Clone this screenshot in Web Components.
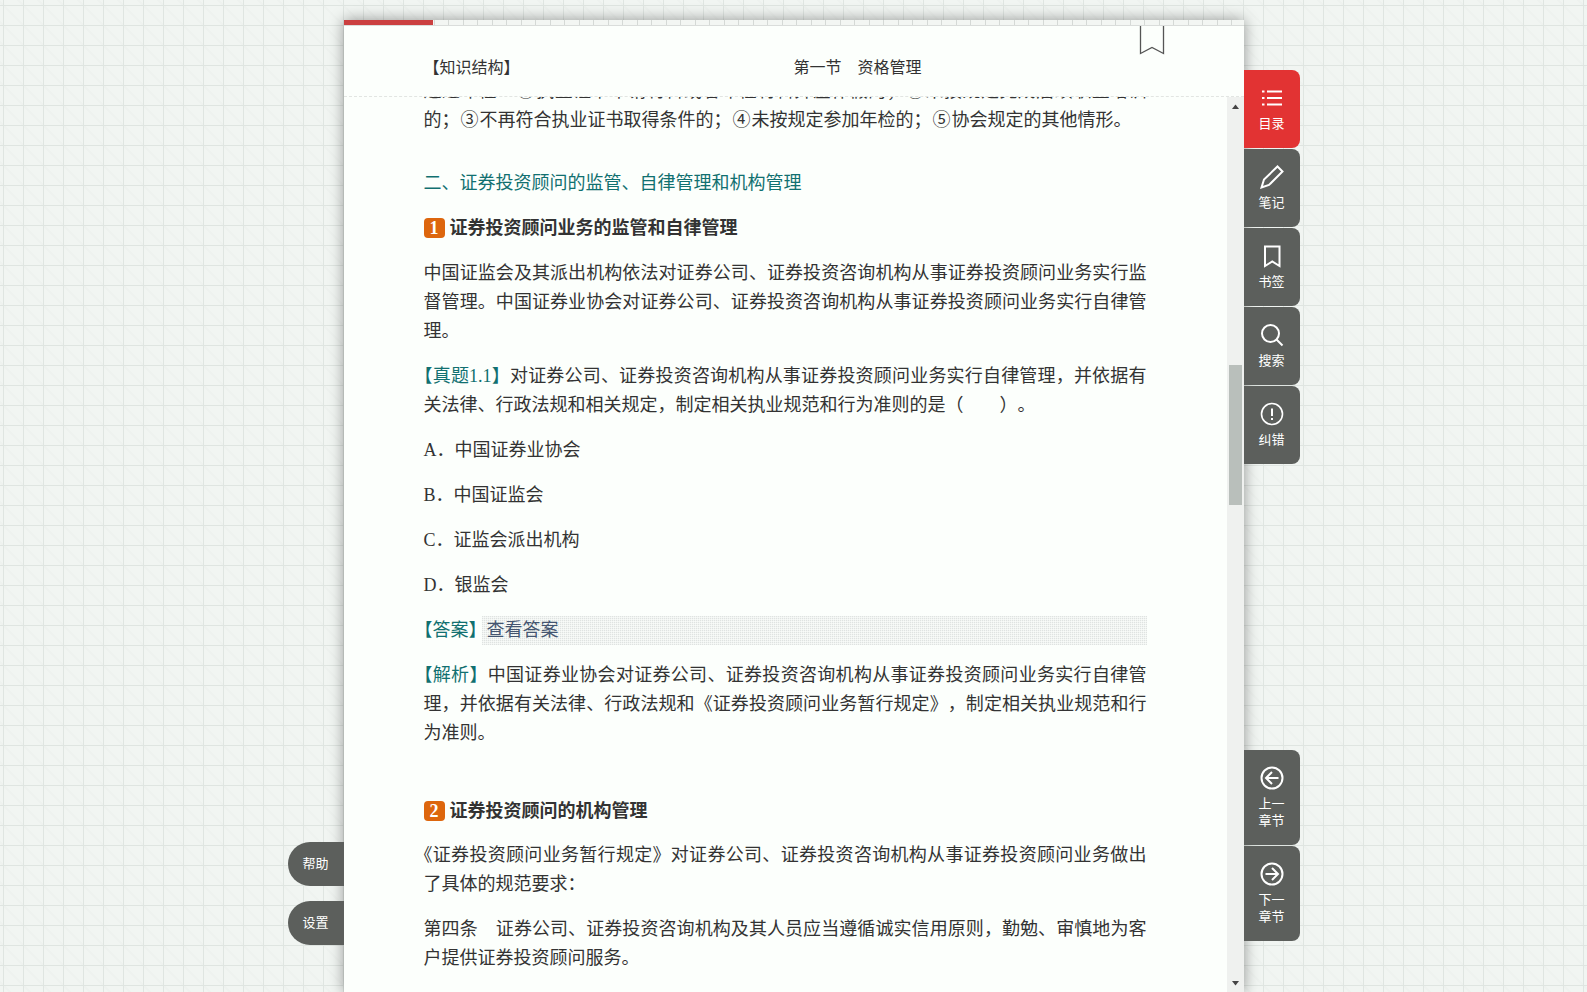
<!DOCTYPE html>
<html lang="zh-CN">
<head>
<meta charset="utf-8">
<title>第一节 资格管理</title>
<style>
html, body { margin: 0; height: 100%; }
body { overflow: hidden; font-family: "Liberation Serif", "Noto Sans CJK SC", sans-serif; color: #333; }
</style>
</head>
<body>
<reader-app></reader-app>

<template id="t-app">
<style>
:host {
  display: grid; grid-template-columns: minmax(0, 1fr) minmax(0, 900px) minmax(0, 1fr); height: 100vh; overflow: hidden;
  background-color: #f1f5f2;
  background-image:
    linear-gradient(90deg, #dfe5e1 1px, transparent 1px),
    linear-gradient(#dfe5e1 1px, transparent 1px),
    linear-gradient(45deg, transparent 47%, #eef2ef 47%, #eef2ef 53%, transparent 53%);
  background-size: 20px 20px;
  background-position: 3px 5px;
}
.left { display: flex; flex-direction: column; align-items: flex-end; justify-content: flex-end; gap: 15px; padding-bottom: 47px; z-index: 1; }
.right { display: flex; flex-direction: column; justify-content: space-between; align-items: flex-start; padding: 70px 0 51px; z-index: 1; }
nav { display: flex; flex-direction: column; gap: 1px; }
</style>
<div class="left">
  <pill-button>帮助</pill-button>
  <pill-button>设置</pill-button>
</div>
<book-page>
  <span slot="chapter">【知识结构】</span>
  <span slot="title">第一节　资格管理</span>
  <book-text></book-text>
</book-page>
<div class="right">
  <nav aria-label="工具">
    <side-button active icon="list">目录</side-button>
    <side-button icon="pen">笔记</side-button>
    <side-button icon="mark">书签</side-button>
    <side-button icon="find">搜索</side-button>
    <side-button icon="warn">纠错</side-button>
  </nav>
  <nav aria-label="翻页">
    <side-button icon="prev" tall>上一<br>章节</side-button>
    <side-button icon="next" tall>下一<br>章节</side-button>
  </nav>
</div>
</template>

<template id="t-pill">
<style>
:host { display: block; }
button { display: flex; align-items: center; width: 56px; height: 44px; padding: 0 0 3px 15px; border: 0; border-radius: 22px 0 0 22px; background: #5c5f5c; color: #fff; font: 13px/17px "Noto Sans CJK SC", sans-serif; white-space: nowrap; }
</style>
<button type="button"><slot></slot></button>
</template>

<template id="t-side">
<style>
:host { display: block; }
button { display: flex; flex-direction: column; align-items: center; justify-content: center; gap: 4px; width: 56px; height: 78px; padding: 0 0 2px; border: 0; border-radius: 0 8px 8px 0; background: #5c5f5c; color: #fff; font: 13px/17px "Noto Sans CJK SC", sans-serif; }
:host([active]) button { background: #e23333; }
:host([tall]) button { height: 95px; }
svg { display: block; width: 24px; height: 24px; fill: none; stroke: #fff; stroke-width: 2; }
</style>
<button type="button"><svg viewBox="0 0 24 24" aria-hidden="true"></svg><span><slot></slot></span></button>
</template>

<template id="t-page">
<style>
:host { display: flex; flex-direction: column; margin-top: 20px; min-height: 0; background: #fcfffc; box-shadow: 0 0 14px rgba(0,0,0,.4); }
.progress { flex: none; height: 5px; border-bottom: 1px solid #dadddb;
  background: linear-gradient(90deg, transparent 13px, #d5d9d6 13px, #d5d9d6 14px, transparent 14px, transparent 28px, #d5d9d6 28px) 4px 0 / 29px 5px #f3f6f3; }
.progress i { display: block; width: 89px; height: 5px; background: #cb4040; }
header { flex: none; position: relative; display: grid; grid-template-columns: 1fr 1fr; height: 70px; border-bottom: 1px dashed #e2e5e2; font-size: 16px; line-height: 24px; }
header div { padding-top: 30px; }
header div:first-child { padding-left: 80px; }
.ribbon { position: absolute; right: 79px; top: 0; width: 26px; height: 29px; padding: 0; border: 0; background: none; }
.ribbon svg { display: block; }
.body { flex: 1; min-height: 0; display: flex; }
.view { flex: 1; min-width: 0; overflow: hidden; padding: 0 80px; }
.bar { flex: none; width: 17px; display: flex; flex-direction: column; align-items: center; background: #eff1ef; }
.bar svg { flex: none; width: 17px; height: 18px; fill: #444; }
.track { flex: 1; width: 13px; display: flex; flex-direction: column; }
.track::before { content: ""; flex: 250; }
.thumb { flex: 140; background: #b9bfbb; }
.track::after { content: ""; flex: 469; }
</style>
<div class="progress"><i></i></div>
<header>
  <div><slot name="chapter"></slot></div>
  <div><slot name="title"></slot></div>
  <button class="ribbon" type="button" aria-label="添加书签"><svg width="26" height="29" viewBox="0 0 26 29" fill="none" stroke="#555" stroke-width="1.3"><path d="M1.5 0V27.500L13 21.500L24.500 27.500V0"/></svg></button>
</header>
<div class="body">
  <div class="view"><slot></slot></div>
  <div class="bar">
    <svg viewBox="0 0 17 18"><path d="M5 12L8.500 7.500L12 12Z"/></svg>
    <div class="track"><div class="thumb"></div></div>
    <svg viewBox="0 0 17 18"><path d="M5 7L8.500 11.500L12 7Z"/></svg>
  </div>
</div>
</template>

<template id="t-text">
<style>
:host { display: block; margin-top: -20px; font-size: 18px; line-height: 29px; color: #333; text-spacing-trim: space-all; }
p, h2, h3 { margin: 0 0 16px; font-size: 18px; text-align: justify; }
h2 { margin-top: 34px; font-weight: 400; color: #117070; }
h3 { display: flex; align-items: center; gap: 5px; font-weight: 700; }
h3 b { width: 21px; height: 20px; margin-bottom: 2px; border-radius: 4px; background: #dd660d; color: #fff; line-height: 20px; text-align: center; }
p + h3 { margin-top: 49px; margin-bottom: 15px; }
.hang { text-indent: -9px; }
em { font-style: normal; color: #117070; }
i { font-style: normal; padding: 0 1px; }
.answer { display: flex; }
.answer button { flex: 1; height: 29px; margin-left: -5px; padding: 0 0 0 5px; border: 0; text-align: left; text-indent: 0; font: inherit; line-height: 27px; color: #445570;
  background: repeating-linear-gradient(90deg, transparent 0 1px, #fcfffc99 1px 2px), repeating-linear-gradient(#dfe3e1 0 1px, #f2f5f3 1px 2px); }
</style>
<p>通过年检：<i>①</i>执业证书申请材料或者年检材料弄虚作假的；<i>②</i>未按规定完成后续职业培训的；<i>③</i>不再符合执业证书取得条件的；<i>④</i>未按规定参加年检的；<i>⑤</i>协会规定的其他情形。</p>
<h2>二、证券投资顾问的监管、自律管理和机构管理</h2>
<h3><b>1</b>证券投资顾问业务的监管和自律管理</h3>
<p>中国证监会及其派出机构依法对证券公司、证券投资咨询机构从事证券投资顾问业务实行监督管理。中国证券业协会对证券公司、证券投资咨询机构从事证券投资顾问业务实行自律管理。</p>
<p class="hang"><em>【真题1.1】</em>对证券公司、证券投资咨询机构从事证券投资顾问业务实行自律管理，并依据有关法律、行政法规和相关规定，制定相关执业规范和行为准则的是（　　）。</p>
<p>A．中国证券业协会</p>
<p>B．中国证监会</p>
<p>C．证监会派出机构</p>
<p>D．银监会</p>
<p class="hang answer"><em>【答案】</em><button type="button">查看答案</button></p>
<p class="hang"><em>【解析】</em>中国证券业协会对证券公司、证券投资咨询机构从事证券投资顾问业务实行自律管理，并依据有关法律、行政法规和《证券投资顾问业务暂行规定》，制定相关执业规范和行为准则。</p>
<h3><b>2</b>证券投资顾问的机构管理</h3>
<p class="hang">《证券投资顾问业务暂行规定》对证券公司、证券投资咨询机构从事证券投资顾问业务做出了具体的规范要求：</p>
<p>第四条　证券公司、证券投资咨询机构及其人员应当遵循诚实信用原则，勤勉、审慎地为客户提供证券投资顾问服务。</p>
</template>

<script>
const ICONS = {
  list: '<path d="M7 5.500h15M7 12h15M7 18.500h15M2 5.500h2.500M2 12h2.500M2 18.500h2.500"/>',
  pen: '<path d="M1.500 22.500L4 14.500L17.500 1.500L22.500 6.500L9 20Z"/>',
  mark: '<path d="M5 2.500H19.500V22L12.250 17.500L5 22Z"/>',
  find: '<circle cx="10.500" cy="10.500" r="8.500"/><path d="M16.500 16.500L22.500 22.500"/>',
  warn: '<circle cx="12" cy="12" r="10.500" stroke-width="1.600"/><path d="M12 6.500V14M12 16V18"/>',
  prev: '<circle cx="12" cy="12" r="10.500"/><path d="M18.500 12H6.500M12 6L6 12L12 18"/>',
  next: '<circle cx="12" cy="12" r="10.500"/><path d="M5.500 12H17.500M12 6L18 12L12 18"/>'
};
function define(name, templateId, setup) {
  customElements.define(name, class extends HTMLElement {
    constructor() {
      super();
      this.attachShadow({ mode: 'open' }).append(document.getElementById(templateId).content.cloneNode(true));
    }
    connectedCallback() { if (setup) setup(this); }
  });
}
define('pill-button', 't-pill');
define('side-button', 't-side', el => {
  el.shadowRoot.querySelector('svg').innerHTML = ICONS[el.getAttribute('icon')];
});
define('book-text', 't-text');
define('book-page', 't-page');
define('reader-app', 't-app');
</script>
</body>
</html>
